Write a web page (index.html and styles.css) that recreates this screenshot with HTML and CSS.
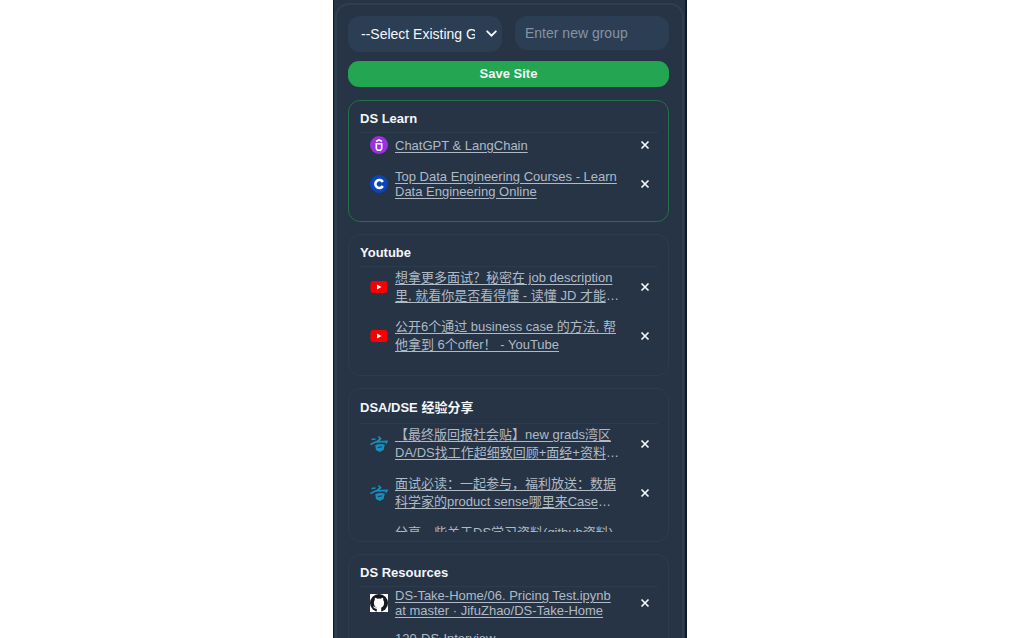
FILE: index.html
```html
<!DOCTYPE html>
<html lang="en">
<head>
<meta charset="utf-8">
<title>Saved sites</title>
<link rel="stylesheet" href="styles.css">
</head>
<body>
<svg class="sprite" aria-hidden="true">
  <symbol id="udemy" viewBox="0 0 18 18"><circle cx="9" cy="9" r="9" fill="#9b30e0"/><path d="M6 5.500 9 3.800l3 1.700M6.300 7v5q0 2.300 2.700 2.300t2.700-2.300V7M6.300 7.700h5.400" fill="none" stroke="#fff" stroke-width="1.600"/></symbol>
  <symbol id="coursera" viewBox="0 0 18 18"><circle cx="9" cy="9" r="9" fill="#0b45bd"/><path d="M12.800 7A4 4 0 1 0 12.800 11" fill="none" stroke="#fff" stroke-width="2.600"/></symbol>
  <symbol id="youtube" viewBox="0 0 18 18"><rect x="0.500" y="3" width="17" height="12" rx="3" fill="#f80000"/><path d="M7 6.500v5L11.600 9z" fill="#fff"/></symbol>
  <symbol id="forum" viewBox="0 0 18 18"><path d="M1.500 4.500 5.500 4M.5 9.500 6 6.800 17 6.300 15.800 8.500M8.500 1.500l2 2.200-3.500 3" fill="none" stroke="#168fc0" stroke-width="1.700"/><path d="M5.200 10.300q4.300-2.200 9.600-.8l-1.200 5.500-4 2-3.600-2z" fill="#168fc0"/><path d="m7.800 12.500 4.200-.6" stroke="#263445" stroke-width="1" fill="none"/></symbol>
  <symbol id="github" viewBox="0 0 18 18"><path fill="#fff" d="M0 0h18v18H0z"/><circle cx="9" cy="9" r="9" fill="#15191e"/><path d="M6.800 18v-3.200c-2.400.3-2.600-1.600-3.900-2.100 1.600-.5 2.100 1.200 3.900.9-1.800-.6-2.900-2.200-2.900-4.900 0-1.200.3-2 .9-2.700-.2-.9-.1-1.600.2-2.300.9 0 1.700.5 2.300 1q1.700-.4 3.400 0c.7-.5 1.400-1 2.300-1 .3.700.4 1.400.2 2.300.6.700.9 1.500.9 2.700 0 2.700-1.100 4.300-2.900 4.900V18z" fill="#fff"/></symbol>
  <symbol id="close" viewBox="0 0 10 10"><path d="m1.500 1.500 7 7m0-7-7 7" fill="none" stroke="#f4f7fa" stroke-width="1.700"/></symbol>
</svg>
<main class="popup">
  <div class="panel">
    <form class="save-form">
      <div class="fields">
        <div class="select-wrap">
          <select class="field group-select" aria-label="Existing group"><option>--Select Existing Group--</option></select>
          <svg class="chevron" viewBox="0 0 12 12" aria-hidden="true"><path d="m2 4 4 4 4-4" fill="none" stroke="#f4f7fa" stroke-width="1.700" stroke-linecap="round"/></svg>
        </div>
        <input class="field group-input" type="text" placeholder="Enter new group" aria-label="New group">
      </div>
      <button class="save" type="button">Save Site</button>
    </form>

    <section class="card active">
      <h2 class="title">DS Learn</h2>
      <ul class="sites">
        <li class="site"><svg class="icon"><use href="#udemy"/></svg><a class="link" href="#">ChatGPT &amp; LangChain</a><button class="remove" type="button" aria-label="Remove"><svg class="cross"><use href="#close"/></svg></button></li>
        <li class="site"><svg class="icon"><use href="#coursera"/></svg><a class="link" href="#">Top Data Engineering Courses - Learn<br>Data Engineering Online</a><button class="remove" type="button" aria-label="Remove"><svg class="cross"><use href="#close"/></svg></button></li>
      </ul>
    </section>

    <section class="card">
      <h2 class="title">Youtube</h2>
      <ul class="sites cjk" lang="zh-CN">
        <li class="site"><svg class="icon"><use href="#youtube"/></svg><a class="link" href="#">想拿更多面试？秘密在 job description<br>里, 就看你是否看得懂 - 读懂 JD 才能<span class="more">…</span></a><button class="remove" type="button" aria-label="Remove"><svg class="cross"><use href="#close"/></svg></button></li>
        <li class="site"><svg class="icon"><use href="#youtube"/></svg><a class="link" href="#">公开6个通过 business case 的方法, 帮<br>他拿到 6个offer！ - YouTube</a><button class="remove" type="button" aria-label="Remove"><svg class="cross"><use href="#close"/></svg></button></li>
      </ul>
    </section>

    <section class="card">
      <h2 class="title cjk" lang="zh-CN">DSA/DSE 经验分享</h2>
      <ul class="sites cjk" lang="zh-CN">
        <li class="site"><svg class="icon"><use href="#forum"/></svg><a class="link" href="#">【最终版回报社会贴】new grads湾区<br>DA/DS找工作超细致回顾+面经+资料<span class="more">…</span></a><button class="remove" type="button" aria-label="Remove"><svg class="cross"><use href="#close"/></svg></button></li>
        <li class="site"><svg class="icon"><use href="#forum"/></svg><a class="link" href="#">面试必读：一起参与，福利放送：数据<br>科学家的product sense哪里来Case<span class="more">…</span></a><button class="remove" type="button" aria-label="Remove"><svg class="cross"><use href="#close"/></svg></button></li>
        <li class="site tall"><svg class="icon"><use href="#forum"/></svg><a class="link" href="#">分享一些关于DS学习资料(github资料)</a></li>
      </ul>
    </section>

    <section class="card">
      <h2 class="title">DS Resources</h2>
      <ul class="sites">
        <li class="site"><svg class="icon"><use href="#github"/></svg><a class="link" href="#">DS-Take-Home/06. Pricing Test.ipynb<br>at master · JifuZhao/DS-Take-Home</a><button class="remove" type="button" aria-label="Remove"><svg class="cross"><use href="#close"/></svg></button></li>
        <li class="site tall"><svg class="icon"><use href="#github"/></svg><a class="link" href="#">120-DS-Interview</a></li>
      </ul>
    </section>
  </div>
</main>
</body>
</html>
```
FILE: styles.css
```css
* { box-sizing: border-box; }

body {
  margin: 0;
  height: 100vh;
  overflow: hidden;
  background: #fff;
  color: #f4f7fa;
  font: 13px/15px "Liberation Sans", "Noto Sans CJK SC", sans-serif;
}

.sprite { display: none; }

.popup {
  width: 100%;
  max-width: 354px;
  height: 100vh;
  overflow: hidden;
  margin: 0 auto;
  padding: 3px 1px 0;
  background: #263445;
  border: solid #101b30;
  border-width: 0 2px 0 1px;
}

.panel {
  min-height: 100vh;
  padding: 11px 13px 12px 11px;
  border: 2px solid #303f4f;
  border-radius: 14px;
}

.save-form { margin-bottom: 13px; }

.fields {
  display: grid;
  grid-template-columns: 1fr 1fr;
  align-items: start;
  gap: 13px;
  margin-bottom: 9px;
}

.select-wrap { position: relative; }

.field {
  display: block;
  width: 100%;
  border: 0;
  border-radius: 12px;
  background: #2c3e54;
  font: 14px/18px "Liberation Sans", sans-serif;
}

.group-select {
  height: 36px;
  padding: 0 27px 0 13px;
  appearance: none;
  color: #f4f7fa;
}

.group-input {
  height: 34px;
  padding: 0 10px;
}

.group-input::placeholder { color: #8593a2; }

.chevron {
  position: absolute;
  top: 11px;
  right: 4px;
  width: 13px;
  height: 13px;
  pointer-events: none;
}

.save {
  display: block;
  width: 100%;
  height: 26px;
  padding: 0 0 2px;
  border: 0;
  border-radius: 11px;
  background: #23a552;
  color: #f4f7fa;
  font: bold 13px/15px "Liberation Sans", sans-serif;
}

.card {
  margin-bottom: 12px;
  padding: 10px 10px 9px 11px;
  border: 1px solid #2d3c4c;
  border-radius: 12px;
}

.card.active { border-color: #257046; }

.title {
  margin: 0;
  padding-bottom: 6px;
  border-bottom: 1px solid #2d3c4c;
  font-size: 13px;
  line-height: 15px;
}

.cjk { line-height: 18px; }

.sites {
  max-height: 108px;
  margin: 0;
  padding: 1px 0 0 10px;
  overflow: hidden;
  list-style: none;
}

.site {
  display: flex;
  align-items: center;
  min-height: 22px;
  margin-bottom: 13px;
}

.cjk .site { margin-bottom: 12px; }
.cjk .link { padding-top: 1px; }

.site.tall { align-items: flex-start; min-height: 36px; }
.site.tall .icon { margin-top: 9px; }

.icon {
  flex: none;
  width: 18px;
  height: 18px;
  margin-right: 7px;
}

.link {
  flex: 1;
  color: #b0bac5;
  white-space: nowrap;
  text-underline-offset: 2px;
}

.more { display: inline-block; }

.remove {
  display: flex;
  padding: 4px;
  margin-right: 4px;
  border: 0;
  background: none;
}

.cross { width: 10px; height: 10px; }
```
